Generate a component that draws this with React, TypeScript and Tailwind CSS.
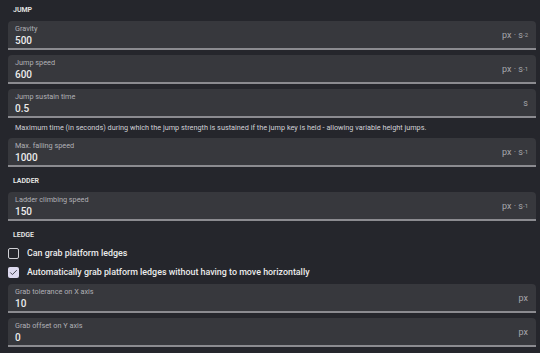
import React from 'react';

type FieldProps = {
  label: string;
  value: string;
  unit?: string;
  exp?: string;
};

// Text field with floating label, value and unit on the right
function Field({ label, value, unit, exp }: FieldProps) {
  return (
    <div className="h-[29px] rounded-t-[4px] bg-[#37383d] border-b-2 border-[#8b8b90] flex items-start justify-between pl-[7px] pr-[8px]">
      <div className="flex flex-col pt-[3px]">
        <span className="text-[7.3px] leading-[10px] text-[#b0b0b6]">{label}</span>
        <span className="text-[10px] leading-[13px] text-[#ececec] font-medium">{value}</span>
      </div>
      {unit && (
        <span className="self-center text-[9px] leading-[10px] text-[#a6a6ab] whitespace-nowrap">
          {unit}
          {exp && <sup className="text-[6px] relative -top-[1px]">{exp}</sup>}
        </span>
      )}
    </div>
  );
}

function Title({ text, className }: { text: string; className: string }) {
  return (
    <div className={`flex items-center pl-[5px] text-[7px] font-semibold text-[#e6e6e6] ${className}`}>
      {text}
    </div>
  );
}

function Check({ checked, label }: { checked: boolean; label: string }) {
  return (
    <div className="h-[19px] flex items-center gap-[8px]">
      {checked ? (
        <div className="w-[11px] h-[11px] rounded-[2px] bg-[#dcd9ee] flex items-center justify-center">
          <svg width="9" height="9" viewBox="0 0 24 24" fill="none" stroke="#3a3b45" strokeWidth="2.5" strokeLinecap="round" strokeLinejoin="round">
            <path d="M4 12.5l5 5L20 6.5" />
          </svg>
        </div>
      ) : (
        <div className="w-[11px] h-[11px] rounded-[2px] border-[1.5px] border-[#cfcfd4]" />
      )}
      <span className="text-[8.9px] font-medium text-[#ececec]">{label}</span>
    </div>
  );
}

export default function App() {
  return (
    <div
      className="w-[540px] h-[353px] overflow-hidden bg-[#25262c] pl-[8px] pr-[4px]"
      style={{ fontFamily: 'Roboto, "Noto Sans", sans-serif' }}
    >
      <Title text="JUMP" className="h-[21px]" />
      <div className="flex flex-col gap-[5px]">
        <Field label="Gravity" value="500" unit="px · s" exp="-2" />
        <Field label="Jump speed" value="600" unit="px · s" exp="-1" />
        <Field label="Jump sustain time" value="0.5" unit="s" />
      </div>
      <div className="h-[20px] flex items-center pl-[7px] text-[7.3px] text-[#d0d0d6]">
        Maximum time (in seconds) during which the jump strength is sustained if the jump key is held - allowing variable height jumps.
      </div>
      <Field label="Max. falling speed" value="1000" unit="px · s" exp="-1" />
      <Title text="LADDER" className="h-[25px] pt-[4px]" />
      <Field label="Ladder climbing speed" value="150" unit="px · s" exp="-1" />
      <Title text="LEDGE" className="h-[23px] pt-[6px]" />
      <Check checked={false} label="Can grab platform ledges" />
      <Check checked={true} label="Automatically grab platform ledges without having to move horizontally" />
      <div className="flex flex-col gap-[5px] mt-[2px]">
        <Field label="Grab tolerance on X axis" value="10" unit="px" />
        <Field label="Grab offset on Y axis" value="0" unit="px" />
      </div>
    </div>
  );
}
